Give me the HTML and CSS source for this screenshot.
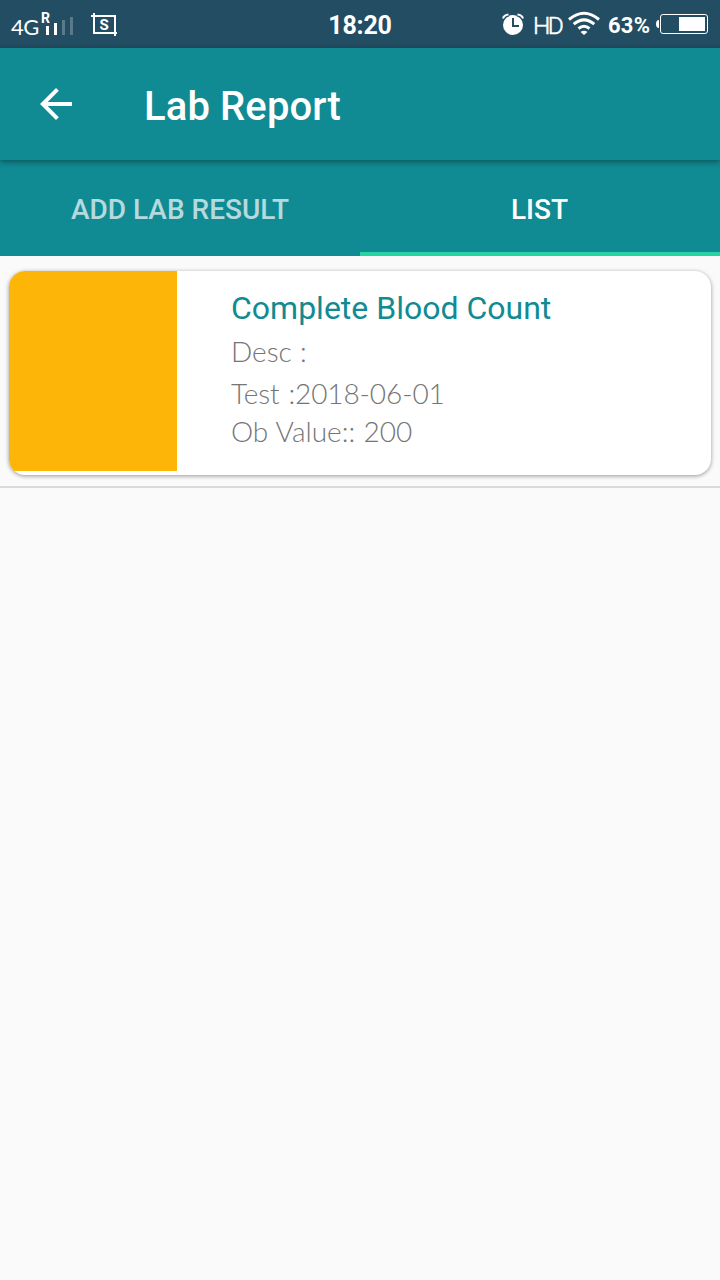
FILE: index.html
```html
<!DOCTYPE html>
<html lang="en">
<head>
<meta charset="utf-8">
<title>Lab Report</title>
<link rel="stylesheet" href="styles.css">
</head>
<body>
<header class="status">
  <div class="status-left">
    <span class="network">4G</span>
    <svg class="signal" width="34" height="48" viewBox="0 0 34 48">
      <text class="roaming" x="1" y="23">R</text>
      <g fill="#fff"><path d="M6 26h3v9H6zM14 23h3v12h-3z"/><path opacity=".25" d="M22 20h3v15h-3zM30 17h3v18h-3z"/></g>
    </svg>
    <svg class="capture" width="28" height="48" viewBox="0 0 28 48">
      <path d="M3 13v20h23M0 16h24v20" fill="none" stroke="#fff" stroke-width="2"/>
      <text class="capture-letter" x="8.5" y="30">S</text>
    </svg>
  </div>
  <span class="clock">18:20</span>
  <div class="status-right">
    <svg class="alarm" width="24" height="48" viewBox="0 0 24 48">
      <circle cx="12" cy="25" r="10" fill="#fff"/>
      <path d="M2 19q1-4 6-4.500M22 19q-1-4-6-4.500" fill="none" stroke="#234d62" stroke-width="4"/>
      <path d="M2 18.500q1-3.500 5.500-4M22 18.500q-1-3.500-5.500-4" fill="none" stroke="#fff" stroke-width="2"/>
      <path d="M12 18v8h6" fill="none" stroke="#234d62" stroke-width="2"/>
    </svg>
    <span class="hd">HD</span>
    <svg class="wifi" width="32" height="48" viewBox="0 0 32 48">
      <g fill="none" stroke="#fff" stroke-width="3"><path d="M1 19.500Q16 7 31 19.500M5.700 24.200Q16 15.500 26.300 24.200M10.500 28.500Q16 24 21.500 28.500"/></g>
      <path d="M12.500 32q3.500-2.700 7 0L16 35z" fill="#fff"/>
    </svg>
    <span class="percent">63%</span>
    <svg class="battery" width="52" height="48" viewBox="0 0 52 48">
      <rect x="4.500" y="14.500" width="47" height="19" rx="2.500" fill="none" stroke="#fff"/>
      <path d="M23 17h26v14H23zM3 20v8Q0 28 0 24t3-4z" fill="#fff"/>
    </svg>
  </div>
</header>
<div class="toolbar">
  <svg class="back" width="32" height="32" viewBox="4 4 16 16"><path fill="#fff" d="M20 11H7.830l5.590-5.590L12 4l-8 8 8 8 1.410-1.410L7.830 13H20z"/></svg>
  <h1 class="title">Lab Report</h1>
</div>
<nav class="tabs">
  <div class="tab">ADD LAB RESULT</div>
  <div class="tab tab-active">LIST</div>
</nav>
<main class="list">
  <article class="card">
    <div class="thumb"></div>
    <div class="details">
      <h2 class="name">Complete Blood Count</h2>
      <p class="line desc">Desc :</p>
      <p class="line test">Test :2018-06-01</p>
      <p class="line value">Ob Value:: 200</p>
    </div>
  </article>
</main>
</body>
</html>
```
FILE: styles.css
```css
* { box-sizing: border-box; }
body { margin: 0; min-height: 1280px; background: #fafafa; font-family: Roboto, sans-serif; }
h1, h2, p { margin: 0; }
svg { display: block; flex: none; }
.status { display: grid; grid-template-columns: 1fr auto 1fr; height: 48px; background: #234d62; color: #fff; line-height: 48px; white-space: nowrap; overflow: hidden; }
.status-left { display: flex; padding-left: 11px; }
.network { width: 29px; font: 400 22px/54px Lato, sans-serif; letter-spacing: -.5px; }
.signal { overflow: visible; }
.roaming { font: 700 14px Roboto, sans-serif; fill: #fff; }
.capture { margin-left: 17px; }
.capture-letter { font: 700 15px Roboto, sans-serif; fill: #fff; }
.clock { font-size: 25px; font-weight: 700; line-height: 51px; letter-spacing: -.2px; }
.status-right { display: flex; justify-content: flex-end; padding-right: 12px; }
.alarm { margin-right: 1px; }
.hd { width: 32px; margin-left: 7px; font-size: 24.5px; font-weight: 300; letter-spacing: -2.5px; line-height: 51px; -webkit-text-stroke: .5px #fff; }
.wifi { margin-left: 3px; }
.percent { width: 43px; margin-left: 8px; font-size: 22px; font-weight: 700; line-height: 51px; letter-spacing: .2px; }
.battery { margin-left: 5px; }
.toolbar { position: relative; display: flex; align-items: center; height: 112px; padding-left: 40px; background: #118b93; box-shadow: 0 2px 6px rgba(0, 0, 0, .4); }
.title { margin: 5px 0 0 72px; color: #fff; font-size: 40px; font-weight: 500; line-height: 48px; letter-spacing: .12px; }
.tabs { display: grid; grid-template-columns: 1fr 1fr; height: 96px; background: #118b93; }
.tab { height: 96px; padding-top: 2px; text-align: center; color: rgba(255, 255, 255, .7); font-size: 28px; font-weight: 500; line-height: 96px; }
.tab-active { padding-right: 1px; color: #fff; border-bottom: 4px solid #27d3a2; }
.list { height: 232px; padding: 15px 9px 0; border-bottom: 2px solid #dadada; }
.card { display: flex; height: 204px; overflow: hidden; border-radius: 16px; background: #fff; box-shadow: 0 1px 4px rgba(0, 0, 0, .4); }
.thumb { width: 168px; height: 200px; background: #fdb507; }
.details { padding: 18px 0 0 54px; }
.name { color: #118b93; font-size: 32px; font-weight: 400; line-height: 38px; }
.line { color: #757575; font: 300 28px/38px Lato, sans-serif; }
.desc { margin-top: 5px; word-spacing: .5px; }
.test { margin-top: 4px; word-spacing: 1.5px; letter-spacing: -.1px; }
.value { word-spacing: .7px; }
```
